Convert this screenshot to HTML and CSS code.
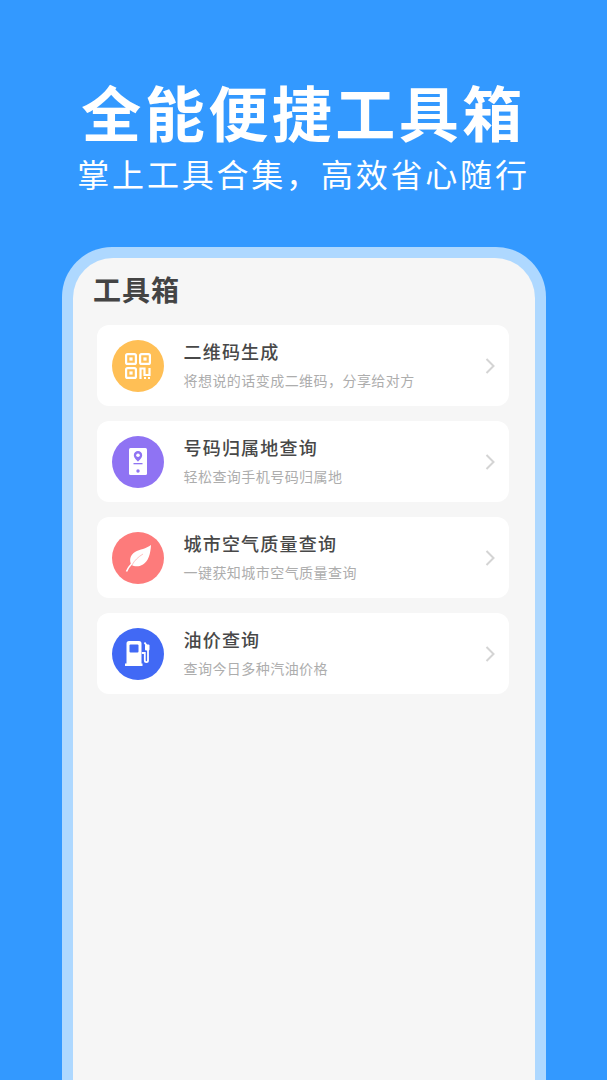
FILE: index.html
```html
<!DOCTYPE html>
<html lang="zh-CN">
<head>
    <meta charset="UTF-8">
    <meta name="viewport" content="width=device-width, initial-scale=1.0">
    <title>全能便捷工具箱</title>
    <link rel="stylesheet" href="styles.css">
</head>
<body>
    <header class="hero">
        <h1>全能便捷工具箱</h1>
        <p>掌上工具合集，高效省心随行</p>
    </header>
    <main class="phone">
        <div class="screen">
            <h2>工具箱</h2>
            <ul class="tools">
                <li class="tool">
                    <span class="icon icon-qr">
                        <svg viewBox="0 0 26 26" width="26" height="26" fill="none" stroke="#fff" stroke-width="2.200">
                            <rect x="1.100" y="1.100" width="9.800" height="9.800" rx="1.500"/>
                            <rect x="15.100" y="1.100" width="9.800" height="9.800" rx="1.500"/>
                            <rect x="1.100" y="15.100" width="9.800" height="9.800" rx="1.500"/>
                            <path d="M15.500 26v-10.500h4v6.500h5v-7"/>
                            <g fill="#fff" stroke="none">
                                <rect x="4.400" y="4.400" width="3.200" height="3.200"/>
                                <rect x="18.400" y="4.400" width="3.200" height="3.200"/>
                                <rect x="4.400" y="18.400" width="3.200" height="3.200"/>
                                <rect x="19" y="24" width="2" height="2"/>
                                <rect x="23" y="24" width="2" height="2"/>
                            </g>
                        </svg>
                    </span>
                    <div class="text">
                        <h3>二维码生成</h3>
                        <p>将想说的话变成二维码，分享给对方</p>
                    </div>
                    <svg class="arrow" viewBox="0 0 10 16" width="10" height="16"><path d="M1.500 1l7 7-7 7"/></svg>
                </li>
                <li class="tool">
                    <span class="icon icon-phone">
                        <svg viewBox="0 0 18 27" width="18" height="27">
                            <rect width="18" height="27" rx="1.500" fill="#fff"/>
                            <path d="M9 3a4.200 4.200 0 0 0-4.200 4.200C4.800 10 9 13.500 9 13.500s4.200-3.500 4.200-6.300A4.200 4.200 0 0 0 9 3z" fill="#8f73f3"/>
                            <circle cx="9" cy="7.200" r="1.800" fill="#fff"/>
                            <rect x="4.500" y="15" width="9" height="1.300" fill="#8f73f3"/>
                            <circle cx="9" cy="23" r="1.700" fill="#8f73f3"/>
                        </svg>
                    </span>
                    <div class="text">
                        <h3>号码归属地查询</h3>
                        <p>轻松查询手机号码归属地</p>
                    </div>
                    <svg class="arrow" viewBox="0 0 10 16" width="10" height="16"><path d="M1.500 1l7 7-7 7"/></svg>
                </li>
                <li class="tool">
                    <span class="icon icon-leaf">
                        <svg viewBox="0 0 26 28" width="26" height="28">
                            <path d="M26 1c-.5 9-2.500 16-8 19.500-4 2.500-8.500 2.300-11.500.5C4 16.500 5 11 10 8c5-3 11-3 16-7z" fill="#fff"/>
                            <path d="M7 21c2.500-4.500 6-8 11-11" fill="none" stroke="#fd7b7b" stroke-opacity="0.450" stroke-width="1"/>
                            <path d="M1.500 27.500c1-2.500 2.500-5 5-7.500" fill="none" stroke="#fff" stroke-width="1.600"/>
                        </svg>
                    </span>
                    <div class="text">
                        <h3>城市空气质量查询</h3>
                        <p>一键获知城市空气质量查询</p>
                    </div>
                    <svg class="arrow" viewBox="0 0 10 16" width="10" height="16"><path d="M1.500 1l7 7-7 7"/></svg>
                </li>
                <li class="tool">
                    <span class="icon icon-fuel">
                        <svg viewBox="0 0 26 25" width="26" height="25">
                            <path d="M1.500 2.500A2.500 2.500 0 0 1 4 0h10a2.500 2.500 0 0 1 2.500 2.500V22.500h1V25H0v-2.500h1.500z" fill="#fff"/>
                            <rect x="4.500" y="3.500" width="9" height="8" rx="1" fill="#4169f5"/>
                            <path d="M19.500 1.500l3.500 5v13a1.600 1.600 0 0 1-3.200 0V12h-3" fill="none" stroke="#fff" stroke-width="1.800"/>
                            <rect x="20" y="3.500" width="4.500" height="6" rx="1" fill="#fff"/>
                        </svg>
                    </span>
                    <div class="text">
                        <h3>油价查询</h3>
                        <p>查询今日多种汽油价格</p>
                    </div>
                    <svg class="arrow" viewBox="0 0 10 16" width="10" height="16"><path d="M1.500 1l7 7-7 7"/></svg>
                </li>
            </ul>
        </div>
    </main>
</body>
</html>
```

FILE: styles.css
```css
* {
    box-sizing: border-box;
}

html, body {
    height: 1080px;
}

body {
    margin: 0;
    overflow: hidden;
    display: flex;
    flex-direction: column;
    background-color: #3399ff;
    font-family: "Noto Sans CJK SC", "Noto Sans", sans-serif;
}

.hero {
    height: 247px;
    padding-top: 73px;
    text-align: center;
    color: #fff;
}

.hero h1 {
    margin: 0;
    font-size: 60px;
    line-height: 76px;
    font-weight: 700;
    letter-spacing: 3.500px;
}

.hero p {
    margin: 2px 0 0;
    font-size: 32px;
    line-height: 44px;
    font-weight: 400;
    letter-spacing: 2.800px;
}

.phone {
    flex: 1;
    margin: 0 61px 0 62px;
    padding: 11px 11px 0;
    background-color: #aed8ff;
    border-radius: 50px 50px 0 0;
}

.screen {
    height: 100%;
    padding: 11px 26px 0 24px;
    background-color: #f6f6f6;
    border-radius: 40px 40px 0 0;
}

.screen h2 {
    margin: 0 0 16px -4px;
    font-size: 28px;
    line-height: 40px;
    font-weight: 700;
    letter-spacing: 1px;
    color: #444;
}

.tools {
    margin: 0;
    padding: 0;
    list-style: none;
    display: flex;
    flex-direction: column;
    gap: 15px;
}

.tool {
    height: 81px;
    padding: 0 14px 0 15px;
    display: flex;
    align-items: center;
    background-color: #fff;
    border-radius: 12px;
}

.icon {
    width: 52px;
    height: 52px;
    margin-right: 20px;
    flex: none;
    display: flex;
    align-items: center;
    justify-content: center;
    border-radius: 50%;
}

.icon-qr { background-color: #ffbf55; }
.icon-phone { background-color: #8f73f3; }
.icon-leaf { background-color: #fd7b7b; }
.icon-fuel { background-color: #4169f5; }

.text {
    flex: 1;
    padding-bottom: 3px;
}

.text h3 {
    margin: 0 0 6px -0.500px;
    font-size: 18px;
    line-height: 26px;
    font-weight: 500;
    letter-spacing: 1.200px;
    color: #484848;
}

.text p {
    margin: 0 0 0 -0.500px;
    font-size: 14px;
    line-height: 20px;
    letter-spacing: 0.450px;
    color: #adadad;
}

.arrow {
    flex: none;
    fill: none;
    stroke: #d4d4d4;
    stroke-width: 2;
}
```
